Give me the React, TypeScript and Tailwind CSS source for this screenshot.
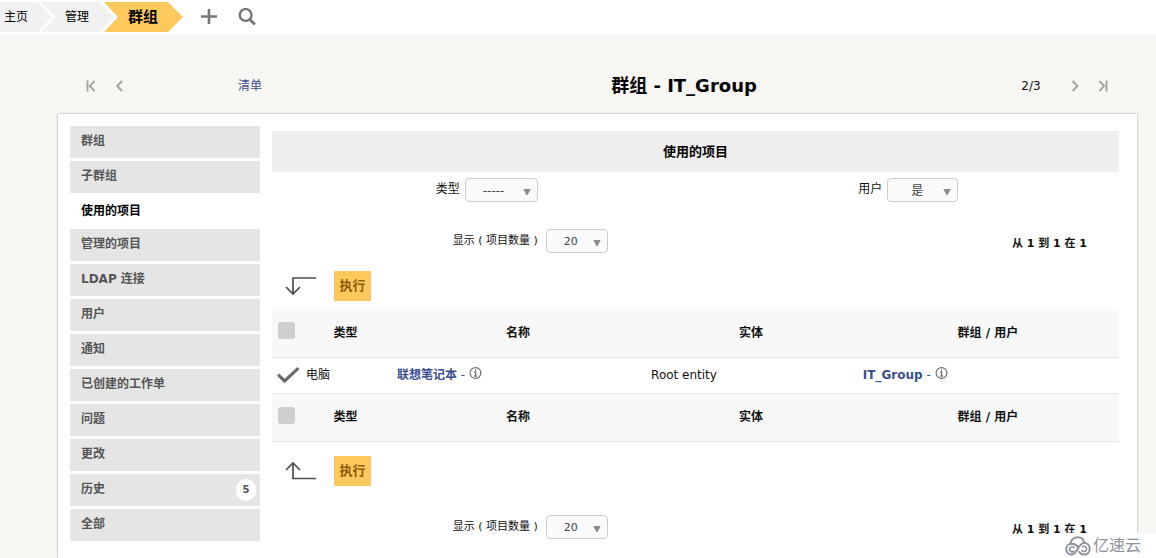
import { useState } from "react";
import type { ReactNode } from "react";

const TABS = [
  { label: "群组" },
  { label: "子群组" },
  { label: "使用的项目" },
  { label: "管理的项目" },
  { label: "LDAP 连接" },
  { label: "用户" },
  { label: "通知" },
  { label: "已创建的工作单" },
  { label: "问题" },
  { label: "更改" },
  { label: "历史", count: 5 },
  { label: "全部" },
];

function Chevron({ label, d }: { label: string; d: string }) {
  return (
    <button aria-label={label} className="flex items-center justify-center text-[#a3a39f]">
      <svg className="w-3 h-3" viewBox="0 0 12 12" fill="none" stroke="currentColor" strokeWidth="1.9">
        <path d={d} />
      </svg>
    </button>
  );
}

function Select({ id, options, className }: { id: string; options: string[]; className: string }) {
  return (
    <span className="relative inline-flex">
      <select
        id={id}
        className={`h-6 appearance-none rounded border border-[#ccc] bg-[#fafafa] pt-0.5 leading-5 text-[#444] outline-none ${className}`}
      >
        {options.map((o) => (
          <option key={o}>{o}</option>
        ))}
      </select>
      <svg className="pointer-events-none absolute right-[7px] top-[11px] w-2 h-1.5" viewBox="0 0 8 6">
        <path d="M0.3 0H7.7L4.6 6H3.4Z" fill="#8c8c8c" />
      </svg>
    </span>
  );
}

function Check({ label, defaultChecked = false }: { label: string; defaultChecked?: boolean }) {
  const [checked, setChecked] = useState(defaultChecked);
  return (
    <label className="relative flex h-[17px] w-7 pl-1.5">
      <input
        type="checkbox"
        aria-label={label}
        checked={checked}
        onChange={() => setChecked(!checked)}
        className="h-[17px] w-[17px] appearance-none rounded-[3px] bg-[#cfcfcf] checked:bg-transparent"
      />
      {checked && (
        <svg className="pointer-events-none absolute left-1 top-0 h-[17px] w-6" viewBox="0 0 24 17" fill="none">
          <path d="M2 7.6L8.6 14L22.4 1.2" stroke="#6b6b6b" strokeWidth="3.2" />
        </svg>
      )}
    </label>
  );
}

function Info() {
  return (
    <svg className="inline-block h-[13px] w-[13px] align-[-1px]" viewBox="0 0 13 13" fill="none">
      <circle cx="6.5" cy="6" r="5.4" stroke="#6f6f6f" strokeWidth="1.2" />
      <path d="M6.6 2.2V3.8M5.2 5H6.6V9M5 9.1H8.2" stroke="#6f6f6f" strokeWidth="1.3" />
    </svg>
  );
}

function Pager({ id }: { id: string }) {
  return (
    <div className="flex h-6 items-center">
      <div className="flex w-[61%] items-center justify-center gap-2">
        <label htmlFor={id} className="text-[11px] leading-5">
          显示 ( 项目数量 )
        </label>
        <Select id={id} options={["20", "50", "100"]} className="w-[62px] pl-[17px] text-[11px]" />
      </div>
      <p className="flex-1 pt-1.5 pr-8 text-right text-[11px] font-bold leading-5">从 1 到 1 在 1</p>
    </div>
  );
}

function Actions({ d }: { d: string }) {
  return (
    <div className="flex h-[30px] items-center gap-[17px] pl-3">
      <svg className="w-[33px] h-5" viewBox="0 0 33 20" fill="none" stroke="#4f4f4f" strokeWidth="1.7">
        <path d={d} />
      </svg>
      <button className="h-[30px] w-[37px] rounded-[1px] bg-[#fec95c] text-[13px] font-bold text-[#8f5a0a]">执行</button>
    </div>
  );
}

function HeadRow({ label }: { label: string }) {
  return (
    <tr className="h-12 border-b border-[#e6e6e6] bg-[#f8f8f8]">
      <td className="pb-1 align-middle">
        <Check label={label} />
      </td>
      <th>类型</th>
      <th>名称</th>
      <th>实体</th>
      <th>群组 / 用户</th>
    </tr>
  );
}

function ItemLink({ children }: { children: ReactNode }) {
  return (
    <>
      <a href="#" className="font-bold text-[#3a4f8f]">
        {children}
      </a>
      <span className="text-[#3a4f8f]"> - </span>
      <Info />
    </>
  );
}

export default function App() {
  const [active, setActive] = useState("使用的项目");

  return (
    <div className="relative flex min-h-screen flex-col bg-[#f7f6f2] font-['DejaVu_Sans','Noto_Sans_CJK_SC',sans-serif] text-[12px] leading-5 text-[#111]">
      <header className="flex h-[35px] items-start bg-white pt-0.5">
        {/* breadcrumb */}
        <nav className="flex h-[30px] text-black">
          <a href="#" className="flex w-[52px] items-center bg-[#f1f1f1] pl-1 [clip-path:polygon(0_0,38px_0,100%_50%,38px_100%,0_100%)]">
            主页
          </a>
          <a
            href="#"
            className="-ml-[11px] flex w-[73px] items-center bg-[#f1f1f1] pl-6 [clip-path:polygon(0_0,58px_0,100%_50%,58px_100%,0_100%,14px_50%)]"
          >
            管理
          </a>
          <a
            href="#"
            className="-ml-[10px] flex w-[79px] items-center bg-[#fec95c] pl-6 text-[15px] font-bold [clip-path:polygon(0_0,64px_0,100%_50%,64px_100%,0_100%,14px_50%)]"
          >
            群组
          </a>
        </nav>
        <div className="flex h-[30px] items-center gap-5 pl-[17px] text-[#777]">
          <button aria-label="添加">
            <svg className="w-[18px] h-[18px]" viewBox="0 0 18 18" stroke="currentColor" strokeWidth="2.6">
              <path d="M9 1V16M1 8.5H17" />
            </svg>
          </button>
          <button aria-label="搜索">
            <svg className="w-[18px] h-[18px]" viewBox="0 0 18 18" fill="none" stroke="currentColor" strokeWidth="2.4">
              <circle cx="7.6" cy="7" r="5.9" />
              <path d="M11.8 11.4L16.8 16.4" strokeWidth="2.8" />
            </svg>
          </button>
        </div>
      </header>

      <div className="mt-[37px] ml-[58px] mr-[19px] grid h-7 grid-cols-[28px_28px_234fr_634fr_60px_28px_28px] items-center pl-[19px] pr-5 text-center">
        <Chevron label="第一个" d="M2.5 0.5V11.5M9.6 1L4.8 6L9.6 11" />
        <Chevron label="上一个" d="M9 1L4.2 6L9 11" />
        <a href="#" className="text-[#3a4f8f]">
          清单
        </a>
        <h1 className="text-[18px] font-bold leading-7 text-black">群组 - IT_Group</h1>
        <span>2/3</span>
        <Chevron label="下一个" d="M3.6 1L8.4 6L3.6 11" />
        <Chevron label="最后一个" d="M2.4 1L7.2 6L2.4 11M9.5 0.5V11.5" />
      </div>

      <main className="mt-[14px] ml-[58px] mr-[19px] flex flex-1 bg-white pl-3 pr-[18px] pt-3 shadow-[0_0_2px_#999]">
        <ul className="flex w-[190px] shrink-0 flex-col gap-[3px]">
          {TABS.map((t) => (
            <li key={t.label}>
              <button
                onClick={() => setActive(t.label)}
                className={`flex w-full items-start justify-between pl-[11px] pr-1 pt-[5px] font-bold ${
                  active === t.label ? "h-[30px] bg-white text-black" : "h-8 bg-[#e5e5e5] text-[#555]"
                }`}
              >
                {t.label}
                {t.count && (
                  <span className="flex h-[22px] w-5 items-center justify-center rounded-full bg-white text-[10px]">{t.count}</span>
                )}
              </button>
            </li>
          ))}
        </ul>

        <section className="ml-3 min-w-0 flex-1 pt-[5px]">
          <h2 className="flex h-[41px] items-center justify-center bg-[#efefef] text-[13px] font-bold text-black">使用的项目</h2>

          <div className="mt-1.5 grid grid-cols-2 pl-1">
            <div className="flex justify-center gap-[5px]">
              <label htmlFor="type" className="leading-[22px]">
                类型
              </label>
              <Select id="type" options={["-----", "电脑"]} className="w-[73px] pl-[17px] text-[12px]" />
            </div>
            <div className="flex justify-center gap-[5px]">
              <label htmlFor="user" className="leading-[22px]">
                用户
              </label>
              <Select id="user" options={["是", "否"]} className="w-[71px] pl-[23px] text-[12px]" />
            </div>
          </div>

          <div className="mt-[27px]">
            <Pager id="limit-top" />
          </div>

          <div className="mt-[18px]">
            <Actions d="M32 2H9V17.5M2 11L9 18L16 11" />
          </div>

          <table className="mt-2 w-full table-fixed border-collapse">
            <colgroup>
              <col className="w-7" />
              <col className="w-[91px]" />
              <col className="w-[30%]" />
              <col className="w-[25%]" />
              <col />
            </colgroup>
            <thead>
              <HeadRow label="全选" />
            </thead>
            <tbody>
              <tr className="h-9 border-b border-[#e6e6e6]">
                <td>
                  <Check label="联想笔记本" defaultChecked />
                </td>
                <td className="pl-1.5">电脑</td>
                <td className="pl-1.5">
                  <ItemLink>联想笔记本</ItemLink>
                </td>
                <td className="pl-1.5">Root entity</td>
                <td className="pl-1.5">
                  <ItemLink>IT_Group</ItemLink>
                </td>
              </tr>
            </tbody>
            <tfoot>
              <HeadRow label="全选 (底部)" />
            </tfoot>
          </table>

          <div className="mt-[14px]">
            <Actions d="M32 17.5H9V2M2 9L9 2L16 9" />
          </div>

          <div className="mt-[29px]">
            <Pager id="limit-bottom" />
          </div>
        </section>
      </main>

      {/* site mark */}
      <div className="absolute bottom-0 right-0 flex h-[25px] w-[94px] items-center gap-0.5 bg-white pl-[3px] text-[16px] text-[#8d919c]">
        <svg className="w-[26px] h-5" viewBox="0 0 26 20" fill="none" stroke="currentColor" strokeWidth="2">
          <path d="M5.6 8.2C5.4 4 8.8 1.2 12.6 1.2C16 1.2 18.6 3.2 19.2 6.4" />
          <path d="M13.2 11.4C11.8 9 9.6 7.8 6.6 7.8C3.4 7.8 1.2 10.2 1.2 13.2C1.2 16.4 3.6 18.6 6.8 18.6C12.6 18.6 12.8 7 19.2 7C22.4 7 24.8 9.4 24.8 12.8C24.8 16.2 22.4 18.6 19.2 18.6C16.6 18.6 15 17.2 13.8 15.2" />
          <path d="M9.4 12.2A2.6 2.6 0 1 0 9.2 14.8M16.6 14A2.6 2.6 0 1 0 17 11.2" strokeWidth="1.6" />
        </svg>
        亿速云
      </div>
    </div>
  );
}
